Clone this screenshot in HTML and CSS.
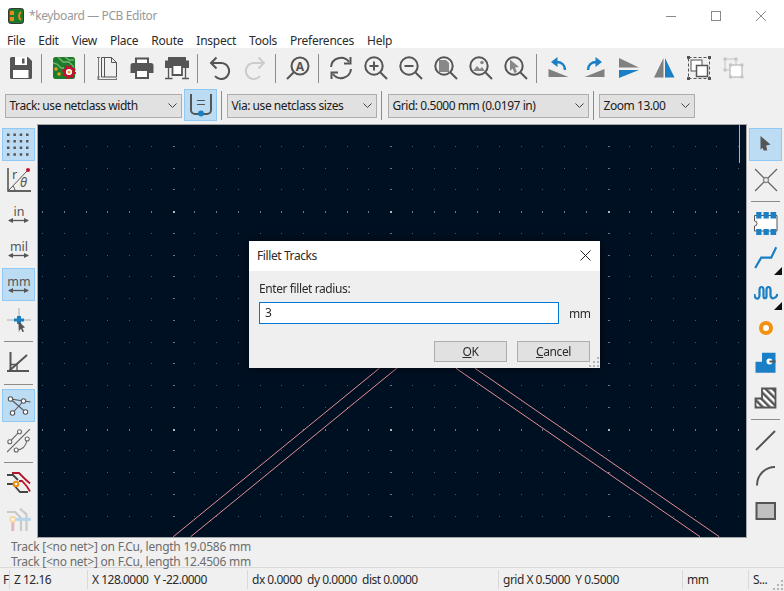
FILE: index.html
```html
<!DOCTYPE html>
<html lang="en">
<head>
  <meta charset="UTF-8">
  <title>*keyboard — PCB Editor</title>
  <link rel="stylesheet" href="styles.css">
</head>
<body>
<div class="window">

  <div class="titlebar">
    <svg class="app-icon" width="16" height="16" viewBox="0 0 16 16">
      <rect x="0.5" y="0.5" width="15" height="15" rx="2" fill="#1c7a2b" stroke="#3a3a3a"/>
      <rect x="2" y="3" width="4" height="4" fill="#e58b1a"/>
      <rect x="2" y="9" width="4" height="4" fill="#e58b1a"/>
      <path d="M13 4a5 5 0 0 0 0 8" fill="none" stroke="#e58b1a" stroke-width="2"/>
    </svg>
    <span class="title-text">*keyboard — PCB Editor</span>
    <div class="win-controls">
      <svg width="10" height="10" viewBox="0 0 10 10"><path d="M0 5.500h10" stroke="#8a8a8a"/></svg>
      <svg width="10" height="10" viewBox="0 0 10 10"><rect x="0.5" y="0.5" width="9" height="9" fill="none" stroke="#8a8a8a"/></svg>
      <svg width="10" height="10" viewBox="0 0 10 10"><path d="M0 0l10 10M10 0L0 10" stroke="#8a8a8a"/></svg>
    </div>
  </div>

  <div class="menubar">
    <span>File</span><span>Edit</span><span>View</span><span>Place</span><span>Route</span><span>Inspect</span><span>Tools</span><span>Preferences</span><span>Help</span>
  </div>

  <div class="toolbar">
    <div class="tool">
      <svg width="24" height="24" viewBox="0 0 24 24"><path d="M1 2.500A1.500 1.500 0 0 1 2.500 1H19l4 4v16.500a1.500 1.500 0 0 1-1.500 1.500h-19A1.500 1.500 0 0 1 1 21.500z" fill="#555"/><path d="M6 1h12v8H6z" fill="#fff"/><path d="M13 2.500h2.500v5H13z" fill="#555"/><path d="M4 14h15.500v8H4z" fill="#fff"/></svg>
    </div>
    <div class="sep"></div>
    <div class="tool">
      <svg width="24" height="24" viewBox="0 0 24 24"><rect x="1" y="1" width="22" height="22" rx="2.500" fill="#1e7a2c"/><path d="M6 1l5 5h6l5 5M1 7l4 1 4 4h3M13 1l4 3h5" fill="none" stroke="#74b86e" stroke-width="1.300"/><circle cx="4" cy="13" r="1.800" fill="#e9a01e"/><circle cx="7" cy="18" r="1.800" fill="#e9a01e"/><circle cx="17" cy="16" r="4.300" fill="#fff" stroke="#c3122f" stroke-width="2.400"/><circle cx="17" cy="16" r="6" fill="none" stroke="#c3122f" stroke-width="2" stroke-dasharray="2.300 2.400"/><circle cx="17" cy="16" r="1.500" fill="#e9a01e"/></svg>
    </div>
    <div class="sep"></div>
    <div class="tool">
      <svg width="24" height="24" viewBox="0 0 24 24" fill="none" stroke="#555"><path d="M6.500 1.500h10l5 5v14.500h-15zM16.500 1.500v5h5M9.500 1.500v19.500"/><path d="M3.500 1v22M2 1.500h3M2 21h3M3 23.500h19M3 22v3M21.500 22v3" stroke="#777"/></svg>
    </div>
    <div class="tool">
      <svg width="24" height="24" viewBox="0 0 24 24"><path d="M6 2.500h12V8H6z" fill="#fff" stroke="#555" stroke-width="2"/><path d="M3 7h18a2.500 2.500 0 0 1 2.500 2.500V17H19v-3H5v3H.5V9.500A2.500 2.500 0 0 1 3 7z" fill="#555"/><path d="M6 14h12v8H6z" fill="#fff" stroke="#555" stroke-width="2"/></svg>
    </div>
    <div class="tool">
      <svg width="24" height="24" viewBox="0 0 24 24"><path d="M3 1h18v4H3z" fill="#555"/><path d="M0 4.500h24V12H0z" fill="#555"/><path d="M7.500 9h9.500v10H7.500z" fill="#fff" stroke="#555" stroke-width="1.800"/><path d="M3.500 12v10.500M20.500 12v10.500M0 22.500h7.500M17 22.500h7" stroke="#555" stroke-width="1.300"/></svg>
    </div>
    <div class="sep"></div>
    <div class="tool">
      <svg width="24" height="24" viewBox="0 0 24 24" fill="none" stroke="#555" stroke-width="2"><path d="M3 7h10.500a8 8 0 1 1-6.500 13.200"/><path d="M8.500 1.500L3 7l5.500 5.500"/></svg>
    </div>
    <div class="tool">
      <svg width="24" height="24" viewBox="0 0 24 24" fill="none" stroke="#ccc" stroke-width="2"><path d="M21 7H10.500A8 8 0 1 0 17 20.200"/><path d="M15.500 1.500L21 7l-5.500 5.500"/></svg>
    </div>
    <div class="sep"></div>
    <div class="tool">
      <svg width="24" height="24" viewBox="0 0 24 24" fill="none" stroke="#555" stroke-width="2"><circle cx="14" cy="10" r="8.500"/><path d="M8 16l-7 7"/><text class="svg-label find-a" x="14" y="14.500" text-anchor="middle">A</text></svg>
    </div>
    <div class="sep"></div>
    <div class="tool">
      <svg width="24" height="24" viewBox="0 0 24 24" fill="none" stroke="#555" stroke-width="2"><path d="M2 11a10 10 0 0 1 18-5"/><path d="M21.500 1v6.500H15"/><path d="M22 13a10 10 0 0 1-18 5"/><path d="M2.500 23v-6.500H9"/></svg>
    </div>
    <div class="tool">
      <svg width="24" height="24" viewBox="0 0 24 24" fill="none" stroke="#555" stroke-width="2"><use href="#mag"/><path d="M5.500 10h9M10 5.500v9"/></svg>
    </div>
    <div class="tool">
      <svg width="24" height="24" viewBox="0 0 24 24" fill="none" stroke="#555" stroke-width="2"><use href="#mag"/><path d="M5.500 10h9"/></svg>
    </div>
    <div class="tool">
      <svg width="24" height="24" viewBox="0 0 24 24" fill="none" stroke="#555" stroke-width="2"><use href="#mag"/><path d="M5 4h7l3 3v9H5z" fill="#888" stroke="none"/></svg>
    </div>
    <div class="tool">
      <svg width="24" height="24" viewBox="0 0 24 24" fill="none" stroke="#555" stroke-width="2"><use href="#mag"/><path d="M4 15l4-5 3 3 2-2 3 4z" fill="#888" stroke="none"/><circle cx="13" cy="6.500" r="1.800" fill="#888" stroke="none"/></svg>
    </div>
    <div class="tool">
      <svg width="24" height="24" viewBox="0 0 24 24" fill="none" stroke="#555" stroke-width="2"><use href="#mag"/><path d="M6 3.500l9 7.500-4 .5 2 4.500-2.500 1-2-4.500-2.500 2.500z" fill="#888" stroke="none"/></svg>
    </div>
    <div class="sep"></div>
    <div class="tool">
      <svg width="24" height="24" viewBox="0 0 24 24"><use href="#rotate"/></svg>
    </div>
    <div class="tool">
      <svg width="24" height="24" viewBox="0 0 24 24"><use href="#rotate" transform="matrix(-1 0 0 1 24 0)"/></svg>
    </div>
    <div class="tool">
      <svg width="24" height="24" viewBox="0 0 24 24"><path d="M2 2l20 9.500H2z" fill="#808080"/><path d="M2 14h20L2 22z" fill="#1a7fc4"/></svg>
    </div>
    <div class="tool">
      <svg width="24" height="24" viewBox="0 0 24 24"><path d="M11.500 2v19.500H2z" fill="#808080"/><path d="M13 2v19.500h9.500z" fill="#1a7fc4"/></svg>
    </div>
    <div class="tool">
      <svg width="24" height="24" viewBox="0 0 24 24"><rect x="1.500" y="1.500" width="21" height="21" fill="none" stroke="#555" stroke-dasharray="3 2"/><path d="M0 0h3v3H0zM21 0h3v3h-3zM0 21h3v3H0zM21 21h3v3h-3z" fill="#555"/><rect x="4" y="4" width="11" height="11" fill="#fff" stroke="#555"/><rect x="9.500" y="9.500" width="11" height="11" fill="#fff" stroke="#555" stroke-width="1.500"/></svg>
    </div>
    <div class="tool">
      <svg width="24" height="24" viewBox="0 0 24 24"><rect x="3" y="3" width="11" height="11" fill="none" stroke="#c4c4c4"/><rect x="8" y="9" width="12" height="12" fill="#fff" stroke="#c4c4c4" stroke-width="1.500"/><path d="M1.500 1.500h3v3h-3zM12.500 1.500h3v3h-3zM1.500 12.500h3v3h-3zM7 7.500h3v3H7zM18.500 7.500h3v3h-3zM7 19.500h3v3H7zM18.500 19.500h3v3h-3z" fill="#c4c4c4"/></svg>
    </div>
  </div>

  <div class="auxbar">
    <div class="combo combo-track"><span>Track: use netclass width</span><svg class="chev" width="9" height="5" viewBox="0 0 9 5"><path d="M.5.500l4 4 4-4" fill="none" stroke="#444"/></svg></div>
    <div class="toggle">
      <svg width="24" height="24" viewBox="0 0 24 24" fill="none" stroke="#555" stroke-width="2"><path d="M2 1v16a4 4 0 0 0 4 4h12a4 4 0 0 0 4-4V1"/><path d="M8 7.500h8M8 11.500h8" stroke-width="1"/><circle cx="12" cy="20.500" r="3" fill="#1a7fc4" stroke="none"/></svg>
    </div>
    <div class="aux-sep"></div>
    <div class="combo combo-via"><span>Via: use netclass sizes</span><svg class="chev" width="9" height="5" viewBox="0 0 9 5"><path d="M.5.500l4 4 4-4" fill="none" stroke="#444"/></svg></div>
    <div class="aux-sep"></div>
    <div class="combo combo-grid"><span>Grid: 0.5000 mm (0.0197 in)</span><svg class="chev" width="9" height="5" viewBox="0 0 9 5"><path d="M.5.500l4 4 4-4" fill="none" stroke="#444"/></svg></div>
    <div class="aux-sep"></div>
    <div class="combo combo-zoom"><span>Zoom 13.00</span><svg class="chev" width="9" height="5" viewBox="0 0 9 5"><path d="M.5.500l4 4 4-4" fill="none" stroke="#444"/></svg></div>
  </div>

  <div class="main">
    <div class="sidebar">
      <div class="tool side active">
        <svg width="24" height="24" viewBox="0 0 24 24" fill="#555"><path d="M0 .5h2.500V3H0zM6.400 .5h2.500V3H6.400zM12.700 .5h2.500V3h-2.500zM19 .5h2.500V3H19zM0 7h2.500v2.500H0zM6.400 7h2.500v2.500H6.400zM12.700 7h2.500v2.500h-2.500zM19 7h2.500v2.500H19zM0 13.600h2.500v2.500H0zM6.400 13.600h2.500v2.500H6.400zM12.700 13.600h2.500v2.500h-2.500zM19 13.600h2.500v2.500H19zM0 20.200h2.500v2.500H0zM6.400 20.200h2.500v2.500H6.400zM12.700 20.200h2.500v2.500h-2.500zM19 20.200h2.500v2.500H19z"/></svg>
      </div>
      <div class="tool side">
        <svg width="24" height="24" viewBox="0 0 24 24"><path d="M1 0v23h23" fill="none" stroke="#333" stroke-width="1.300"/><path d="M1 23L21 2" stroke="#555"/><path d="M8 23a7 7 0 0 0-2-5" fill="none" stroke="#555"/><circle cx="21" cy="2" r="2" fill="#c3122f"/><text class="svg-label polar" x="5" y="11">r</text><text class="svg-label polar svg-italic" x="13" y="19">θ</text></svg>
      </div>
      <div class="tool side">
        <svg width="24" height="24" viewBox="0 0 24 24"><text class="svg-label unit" x="12" y="13" text-anchor="middle">in</text><use href="#unit-arrow"/></svg>
      </div>
      <div class="tool side">
        <svg width="24" height="24" viewBox="0 0 24 24"><text class="svg-label unit" x="12" y="13" text-anchor="middle">mil</text><use href="#unit-arrow"/></svg>
      </div>
      <div class="tool side active">
        <svg width="24" height="24" viewBox="0 0 24 24"><text class="svg-label unit" x="12" y="13" text-anchor="middle">mm</text><use href="#unit-arrow"/></svg>
      </div>
      <div class="tool side">
        <svg width="24" height="24" viewBox="0 0 24 24"><path d="M12 0v24M0 12h24" stroke="#aaa"/><path d="M7 10.500h3V8h4v2.500h3v3h-3V16h-4v-2.500H7z" fill="#1a7fc4"/><path d="M11.500 13l6.500 6.500-2.500.5 1.500 3.500-1.500.7-1.500-3.500-2 2z" fill="#555"/></svg>
      </div>
      <div class="hsep"></div>
      <div class="tool side">
        <svg width="24" height="24" viewBox="0 0 24 24" fill="none" stroke="#555" stroke-width="2"><path d="M3.500 1v20"/><path d="M0 20h22"/><path d="M2 20L20 4"/><path d="M10 20v-6.500H3" stroke-width="1.300"/></svg>
      </div>
      <div class="hsep"></div>
      <div class="tool side active">
        <svg width="24" height="24" viewBox="0 0 24 24" fill="#fff" stroke="#555" stroke-width="1.100"><path d="M3.500 5l15 13M3.500 5l20 3M16.500 7L5.500 19" fill="none"/><circle cx="3.500" cy="5" r="2.200"/><circle cx="16.500" cy="7" r="2.200"/><circle cx="5.500" cy="19" r="2.200"/><circle cx="18.500" cy="18" r="2.200"/></svg>
      </div>
      <div class="tool side">
        <svg width="24" height="24" viewBox="0 0 24 24" fill="#fff" stroke="#666" stroke-width="1.100"><path d="M0 23L23 0M2.800 12.700L12.500 2.700M9.200 21c6 0 10-4 11-11" fill="none"/><circle cx="2.800" cy="12.700" r="2"/><circle cx="12.500" cy="2.700" r="2"/><circle cx="9.200" cy="21" r="2"/><circle cx="20.200" cy="10" r="2"/></svg>
      </div>
      <div class="hsep"></div>
      <div class="tool side">
        <svg width="24" height="24" viewBox="0 0 24 24" fill="none" stroke-width="1.800"><path d="M5 1h7l6 6 5 4.500" stroke="#b3162f"/><path d="M12 9h3l5 5.500 3 5" stroke="#b3162f"/><path d="M0 3h6l5 5" stroke="#444"/><path d="M0 12h6l7 8h8" stroke="#444"/><circle cx="9" cy="12" r="2.300" fill="#fff" stroke="#ef8d0e" stroke-width="2"/></svg>
      </div>
      <div class="tool side">
        <svg width="24" height="24" viewBox="0 0 24 24" fill="none" stroke-width="2.200"><path d="M0 5h8l6 6v13" stroke="#c9c9c9"/><path d="M13 1.700l6.500 5.600V24" stroke="#c9c9c9"/><path d="M6 12.300h18" stroke="#b6d5ea" stroke-width="3"/><path d="M5.800 14v11" stroke="#e8b4bb" stroke-width="3"/><circle cx="5.800" cy="12.300" r="2.400" fill="#fff" stroke="#f6d6a6" stroke-width="2"/></svg>
      </div>
    </div>

    <div class="canvas-wrap">
      <canvas id="pcb" width="708" height="412"></canvas>
      <div class="cursor-line"></div>

      <div class="dialog">
        <div class="dialog-title">
          <span>Fillet Tracks</span>
          <svg width="11" height="11" viewBox="0 0 11 11"><path d="M.5.500l10 10M10.500.500l-10 10" stroke="#222"/></svg>
        </div>
        <div class="dialog-body">
          <div class="dialog-label">Enter fillet radius:</div>
          <div class="dialog-row">
            <div class="dialog-input">3</div>
            <span class="dialog-unit">mm</span>
          </div>
          <div class="dialog-buttons">
            <div class="btn"><u>O</u>K</div>
            <div class="btn"><u>C</u>ancel</div>
          </div>
        </div>
        <svg class="grip" width="11" height="11" viewBox="0 0 11 11" fill="#b5b5b5"><path d="M8 0h2v2H8zM4 4h2v2H4zM8 4h2v2H8zM0 8h2v2H0zM4 8h2v2H4zM8 8h2v2H8z"/></svg>
      </div>
    </div>

    <div class="sidebar">
      <div class="tool side active">
        <svg width="24" height="24" viewBox="0 0 24 24"><path d="M6.500 3l10 8.500-4.300 1 1 5h-3.400l-1.600-2.700-1.700 2z" fill="#555"/></svg>
      </div>
      <div class="tool side">
        <svg width="24" height="24" viewBox="0 0 24 24" fill="none" stroke="#666" stroke-width="1.300"><path d="M1 1l9 9M14 14l9 9M23 1l-9 9M10 14l-9 9"/><circle cx="12" cy="12" r="2.500" stroke="#888"/></svg>
      </div>
      <div class="hsep"></div>
      <div class="tool side">
        <svg width="24" height="24" viewBox="0 0 24 24"><path d="M.5 4.500H23V20H.5v-5a2.500 2.500 0 0 0 0-5z" fill="#fff" stroke="#555"/><path d="M2.200 1h5.300v6.500H2.200zM9.500 1h5.300v6.500H9.500zM16.500 1h5.700v6.500h-5.700zM2.200 18h5.300v6.500H2.200zM9.500 18h5.300v6.500H9.500zM16.500 18h5.700v6.500h-5.700z" fill="#1a7fc4"/></svg>
      </div>
      <div class="tool side has-more">
        <svg width="24" height="24" viewBox="0 0 24 24" fill="none" stroke="#1a7fc4" stroke-width="2.200"><path d="M1.200 22l6-10.300h10l5-10.400"/></svg>
      </div>
      <div class="tool side has-more">
        <svg width="24" height="24" viewBox="0 0 24 24" fill="none" stroke="#1a7fc4" stroke-width="2.200"><path d="M.5 13c0 6 5 6 5 1V9c0-4 4-4 4 0v6c0 3 3 3 3 0V9c0-4 4-4 4 0v5c0 5 6 4 7-1"/></svg>
      </div>
      <div class="tool side">
        <svg width="24" height="24" viewBox="0 0 24 24"><circle cx="12" cy="12" r="5" fill="#fff" stroke="#f0920e" stroke-width="4"/></svg>
      </div>
      <div class="tool side">
        <svg width="24" height="24" viewBox="0 0 24 24"><path d="M8 1.700h13.500v20H1.500v-11H8z" fill="#1a7fc4"/><circle cx="15.500" cy="10.500" r="3" fill="#fff"/><path d="M15.500 10.500h6" stroke="#555" stroke-width="2"/></svg>
      </div>
      <div class="tool side">
        <svg width="24" height="24" viewBox="0 0 24 24"><defs><pattern id="hatch" width="5" height="5" patternUnits="userSpaceOnUse" patternTransform="rotate(-45)"><rect width="5" height="5" fill="#fff"/><rect width="2.500" height="5" fill="#555"/></pattern></defs><path d="M8 2.500h13.500v19H1.500v-9H8z" fill="url(#hatch)" stroke="#555" stroke-width="1.800"/></svg>
      </div>
      <div class="hsep"></div>
      <div class="tool side">
        <svg width="24" height="24" viewBox="0 0 24 24"><path d="M2 21L21 2" stroke="#555" stroke-width="2"/></svg>
      </div>
      <div class="tool side">
        <svg width="24" height="24" viewBox="0 0 24 24"><path d="M3 21.500C3 11 11 3 21 3" fill="none" stroke="#555" stroke-width="2"/></svg>
      </div>
      <div class="tool side">
        <svg width="24" height="24" viewBox="0 0 24 24"><rect x="2.500" y="4" width="18.500" height="16" fill="#c0c0c0" stroke="#555" stroke-width="2"/></svg>
      </div>
    </div>
  </div>

  <div class="messages">
    <div>Track [&lt;no net&gt;] on F.Cu, length 19.0586 mm</div>
    <div>Track [&lt;no net&gt;] on F.Cu, length 12.4506 mm</div>
  </div>

  <div class="statusbar">
    <div class="cell cell-f">F</div>
    <div class="cell cell-z">Z 12.16</div>
    <div class="cell cell-xy">X 128.0000&nbsp; Y -22.0000</div>
    <div class="cell cell-dx">dx 0.0000&nbsp; dy 0.0000&nbsp; dist 0.0000</div>
    <div class="cell cell-grid">grid X 0.5000&nbsp; Y 0.5000</div>
    <div class="cell cell-unit">mm</div>
    <div class="cell cell-s">S...</div>
    <svg class="grip" width="11" height="11" viewBox="0 0 11 11" fill="#b5b5b5"><path d="M8 0h2v2H8zM4 4h2v2H4zM8 4h2v2H8zM0 8h2v2H0zM4 8h2v2H4zM8 8h2v2H8z"/></svg>
  </div>
</div>

<!-- shared icon parts -->
<svg class="defs" width="0" height="0">
  <defs>
    <g id="mag"><circle cx="10" cy="10" r="8.700"/><path d="M16.500 16.500l6.500 6.500"/></g>
    <g id="rotate"><path d="M1.500 13l20 8h-20z" fill="#808080"/><path d="M18 14c0-5-3.500-8-8.500-8" fill="none" stroke="#1a7fc4" stroke-width="2.500"/><path d="M10.500 1v10L4 6z" fill="#1a7fc4"/></g>
    <g id="unit-arrow"><path d="M2 17.500h19" stroke="#555" stroke-width="1.300"/><path d="M1 17.500l5-2.500v5zM22 17.500l-5-2.500v5z" fill="#555"/></g>
  </defs>
</svg>

<script src="script.js"></script>
</body>
</html>
```

FILE: styles.css
```css
body {
  margin: 0;
  font-family: "Noto Sans", sans-serif;
  font-size: 12px;
  letter-spacing: -0.4px;
  color: #2b2b2b;
  background: #f0f0f0;
}

.window {
  display: flex;
  flex-direction: column;
  width: 784px;
  height: 591px;
  overflow: hidden;
}

/* title and menu */
.titlebar {
  display: flex;
  align-items: center;
  height: 31px;
  padding-left: 8px;
  background: #fff;
}

.title-text {
  margin-left: 5px;
  color: #999;
}

.win-controls {
  display: flex;
  gap: 35px;
  margin-left: auto;
  padding-right: 18px;
}

.menubar {
  display: flex;
  align-items: center;
  box-sizing: border-box;
  height: 17px;
  padding: 1px 0 0 0.500px;
  letter-spacing: -0.25px;
  background: #fff;
}

.menubar span {
  padding: 0 6.500px;
}

/* top toolbars */
.toolbar {
  display: flex;
  align-items: center;
  height: 40px;
  padding-left: 3px;
}

.tool {
  display: flex;
  align-items: center;
  justify-content: center;
  width: 35px;
  height: 35px;
}

.sep {
  width: 1px;
  height: 29px;
  margin: 0 4px 0 3px;
  background: #8c8c8c;
}

.auxbar {
  display: flex;
  align-items: flex-start;
  height: 36px;
  padding-left: 5px;
}

.combo {
  display: flex;
  align-items: center;
  justify-content: space-between;
  box-sizing: border-box;
  height: 24px;
  margin-top: 6px;
  padding: 0 4px 2px 3.500px;
  border: 1px solid #adadad;
  background: #e1e1e1;
  color: #1a1a1a;
  letter-spacing: -0.45px;
}

.combo-track { width: 177px; }
.combo-via { width: 150px; }
.combo-grid { width: 201px; margin-left: 1px; }
.combo-zoom { width: 96px; }

.toggle {
  display: flex;
  align-items: center;
  justify-content: center;
  box-sizing: border-box;
  width: 33px;
  height: 32px;
  margin: 1px 0 0 2px;
  border: 1px solid #90c8f6;
  background: #bcdcf4;
}

.aux-sep {
  width: 1px;
  height: 29px;
  margin: 3px 5px 0 4px;
  background: #8c8c8c;
}

/* middle row */
.main {
  display: flex;
  height: 414px;
}

.sidebar {
  display: flex;
  flex-direction: column;
  align-items: center;
  flex: none;
  box-sizing: border-box;
  width: 37px;
  padding-top: 3px;
}

.tool.side {
  position: relative;
  box-sizing: border-box;
  width: 33px;
  height: 33px;
  margin: 1px 0;
  border: 1px solid transparent;
}

.tool.active {
  border-color: #90c8f6;
  background: #bcdcf4;
}

.has-more::after {
  content: "";
  position: absolute;
  right: -1px;
  bottom: -2px;
  border-style: solid;
  border-width: 0 0 8px 8px;
  border-color: transparent transparent #111 transparent;
}

.hsep {
  width: 29px;
  height: 1px;
  margin: 3.500px 0;
  background: #8c8c8c;
}

.canvas-wrap {
  position: relative;
  flex: none;
  width: 710px;
  height: 414px;
  box-sizing: border-box;
  border: 1px solid #a6a6a6;
  background: #001023;
}

#pcb {
  display: block;
}

.cursor-line {
  position: absolute;
  top: 0;
  left: 701px;
  width: 1px;
  height: 38px;
  background: #aeb4b8;
}

/* dialog */
.dialog {
  position: absolute;
  left: 211px;
  top: 116px;
  display: flex;
  flex-direction: column;
  box-sizing: border-box;
  width: 351px;
  height: 127px;
  background: #efefef;
  box-shadow: 0 0 10px rgba(0, 0, 0, 0.6);
}

.dialog-title {
  display: flex;
  align-items: center;
  justify-content: space-between;
  box-sizing: border-box;
  height: 30px;
  padding: 0 9px 2px 8px;
  background: #fff;
}

.dialog-body {
  padding: 10px 10px 0 10px;
}

.dialog-label {
  line-height: 16px;
}

.dialog-row {
  display: flex;
  align-items: center;
  margin-top: 5px;
}

.dialog-input {
  flex: none;
  box-sizing: border-box;
  width: 300px;
  height: 22px;
  padding-left: 5px;
  border: 1px solid #0078d7;
  background: #fff;
  line-height: 20px;
}

.dialog-unit {
  flex: none;
  margin-left: 10px;
}

.dialog-buttons {
  display: flex;
  justify-content: flex-end;
  gap: 10px;
  margin-top: 17px;
}

.btn {
  box-sizing: border-box;
  width: 73px;
  height: 21px;
  border: 1px solid #adadad;
  background: #e1e1e1;
  text-align: center;
  line-height: 19px;
}

.grip {
  position: absolute;
  right: 0;
  bottom: 0;
}

/* bottom */
.messages {
  box-sizing: border-box;
  height: 30px;
  padding: 2px 0 0 11px;
  border-bottom: 1px solid #d9d9d9;
  color: #6d6d6d;
  line-height: 14.500px;
  letter-spacing: -0.25px;
}

.statusbar {
  position: relative;
  display: flex;
  align-items: center;
  height: 23px;
  letter-spacing: -0.5px;
}

.cell {
  flex: none;
  box-sizing: border-box;
  height: 19px;
  padding-left: 4px;
  border-right: 1px solid #d9d9d9;
  line-height: 19px;
  white-space: nowrap;
}

.cell-f { width: 10px; padding-left: 3px; }
.cell-z { width: 78px; }
.cell-xy { width: 160px; }
.cell-dx { width: 251px; }
.cell-grid { width: 184px; }
.cell-unit { width: 66px; }
.cell-s { width: 35px; border-right: none; }

/* svg bits */
.svg-label {
  font-family: "Noto Sans", sans-serif;
  font-size: 11px;
  letter-spacing: 0;
  fill: #555;
  stroke: none;
}

.svg-italic {
  font-style: italic;
}

.find-a {
  font-size: 12px;
  font-weight: bold;
}

.polar {
  font-size: 13px;
}

.unit {
  font-size: 12.500px;
}

.defs {
  position: absolute;
}
```

FILE: script.js
```js
// board view: grid points and the two track pairs
var canvas = document.getElementById("pcb");
var ctx = canvas.getContext("2d");

var OFFSET_X = 38;
var OFFSET_Y = 125;
var STEP = 21.75;
var MAJOR_X = 172.7;
var MAJOR_Y = 428.7;

for (var i = -6; i < 30; i++) {
  for (var j = -13; j < 6; j++) {
    var px = MAJOR_X + i * STEP;
    var py = MAJOR_Y + j * STEP;
    var wide = ((i % 10) + 10) % 10 === 0;
    var tall = ((j % 10) + 10) % 10 === 0;
    ctx.fillStyle = wide && tall ? "#b4b8b8" : wide || tall ? "#6c7982" : "#4d5c67";
    ctx.fillRect(Math.round(px) - OFFSET_X, Math.round(py) - OFFSET_Y, wide ? 2 : 1, tall ? 2 : 1);
  }
}

var tracks = [
  [173.3, 536.7, 379.3, 368.3],
  [190.7, 536.7, 396.7, 368.3],
  [456, 368.3, 700, 536.7],
  [475, 368.3, 719.3, 536.7]
];

ctx.strokeStyle = "#e58f8f";
ctx.lineWidth = 1;
tracks.forEach(function(t) {
  ctx.beginPath();
  ctx.moveTo(t[0] - OFFSET_X, t[1] - OFFSET_Y);
  ctx.lineTo(t[2] - OFFSET_X, t[3] - OFFSET_Y);
  ctx.stroke();
});
```
